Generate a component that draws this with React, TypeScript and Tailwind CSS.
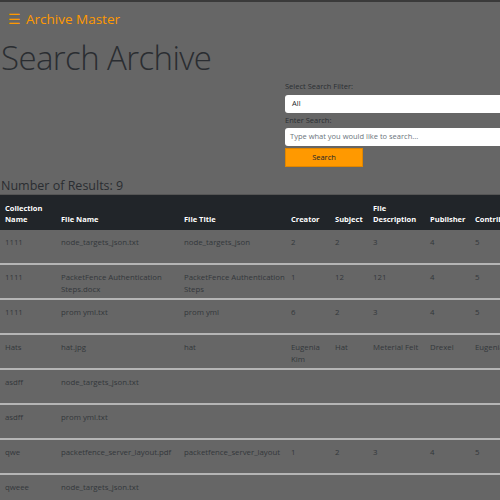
const COLUMNS = [
  { label: ["Collection", "Name"], width: "w-[56px]" },
  { label: ["File Name"], width: "w-[123px]" },
  { label: ["File Title"], width: "w-[107px]" },
  { label: ["Creator"], width: "w-[44px]" },
  { label: ["Subject"], width: "w-[38px]" },
  { label: ["File", "Description"], width: "w-[57px]" },
  { label: ["Publisher"], width: "w-[45px]" },
  { label: ["Contributor"], width: "w-[60px]" },
];

const ROWS: string[][] = [
  ["1111", "node_targets_json.txt", "node_targets_json", "2", "2", "3", "4", "5"],
  ["1111", "PacketFence Authentication Steps.docx", "PacketFence Authentication Steps", "1", "12", "121", "4", "5"],
  ["1111", "prom yml.txt", "prom yml", "6", "2", "3", "4", "5"],
  ["Hats", "hat.jpg", "hat", "Eugenia Kim", "Hat", "Meterial Felt", "Drexel", "Eugenia"],
  ["asdff", "node_targets_json.txt", "", "", "", "", "", ""],
  ["asdff", "prom yml.txt", "", "", "", "", "", ""],
  ["qwe", "packetfence_server_layout.pdf", "packetfence_server_layout", "1", "2", "3", "4", "5"],
  ["qweee", "node_targets_json.txt", "", "", "", "", "", ""],
  ["", "", "", "", "", "", "", ""],
];

function SearchForm() {
  return (
    <div className="ml-[285px] mt-[1px] flex w-[240px] shrink-0 flex-col text-[7.5px] text-[#2b2f33]">
      <label className="leading-[11px]">Select Search Filter:</label>
      <div className="mt-[3px] flex h-[18px] items-center rounded-[3px] bg-white pl-[7px] text-[7.5px] text-[#212529]">
        All
      </div>
      <label className="mt-[2px] leading-[11px]">Enter Search:</label>
      <div className="mt-[2px] flex h-[18px] items-center rounded-[3px] bg-white pl-[5px] text-[7.5px] text-[#6c757d]">
        Type what you would like to search...
      </div>
      <button className="mt-[2px] h-[19px] w-[78px] border border-[#e08600] bg-[#ff9900] text-[7.5px] text-[#212529]">
        Search
      </button>
    </div>
  );
}

function ResultsTable() {
  return (
    <div className="w-[650px] text-[7.8px]">
      <div className="flex h-[36px] items-end border-t border-[#555] bg-[#212529] pb-[5px] text-[7.5px] font-bold text-white">
        {COLUMNS.map((c, i) => (
          <div key={i} className={`${c.width} shrink-0 pl-[5px] leading-[11px]`}>
            {c.label.map((l) => (
              <div key={l}>{l}</div>
            ))}
          </div>
        ))}
      </div>
      {ROWS.map((row, r) => (
        <div
          key={r}
          className="flex h-[35px] border-b-2 border-[#b5b5b5] pt-[6px] text-[#33373b]"
        >
          {row.map((cell, i) => (
            <div key={i} className={`${COLUMNS[i].width} shrink-0 pl-[5px] pr-[1px] leading-[12px]`}>
              {cell}
            </div>
          ))}
        </div>
      ))}
    </div>
  );
}

export default function App() {
  return (
    <div
      className="h-[500px] w-[500px] overflow-hidden border-t-2 border-[#3a3a3a] bg-[#666666]"
      style={{ fontFamily: '"Open Sans", "Noto Sans", sans-serif' }}
    >
      {/* Navbar */}
      <div className="flex h-[34px] items-center pl-[8px] text-[13.5px] text-[#ff9900]">
        <span className="mr-[5px]">☰</span>
        <span>Archive Master</span>
      </div>

      {/* Title + form */}
      <div className="flex flex-col">
        <h1 className="pl-[1px] text-[33px] font-light leading-[44px] tracking-[-0.6px] text-[#2a2d31]">
          Search Archive
        </h1>
        <SearchForm />
      </div>

      <div className="mt-[10px] pl-[1px] text-[12.5px] leading-[17px] text-[#2a2d31]">
        Number of Results: 9
      </div>

      <ResultsTable />
    </div>
  );
}
